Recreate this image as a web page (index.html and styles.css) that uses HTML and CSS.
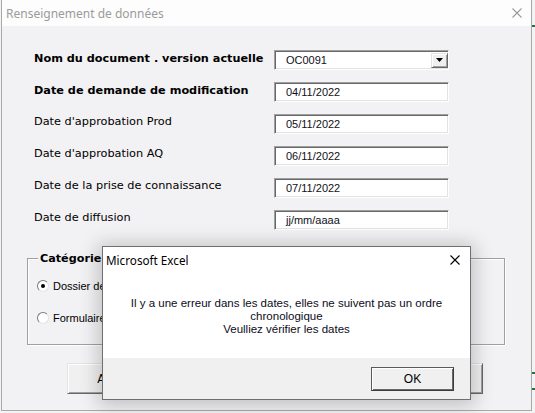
FILE: index.html
```html
<!DOCTYPE html>
<html lang="fr">
<head>
<meta charset="utf-8">
<title>Renseignement de données</title>
<link rel="stylesheet" href="styles.css">
</head>
<body>
<div class="desktop">
  <div class="xl-line xl-a"></div>
  <div class="xl-line xl-b"></div>
  <div class="xl-line xl-c"></div>

  <section class="win">
    <header class="titlebar">
      <span class="win-title">Renseignement de données</span>
      <svg class="x x-dim" width="10" height="10" viewBox="0 0 10 10"><path d="M0.5 0.5L9.5 9.5M9.5 0.5L0.5 9.5"/></svg>
    </header>
    <div class="client">
      <div class="form">
        <span class="lbl strong">Nom du document . version actuelle</span>
        <div class="field combo"><span class="val">OC0091</span><span class="dd"><svg width="7" height="4" viewBox="0 0 7 4"><path d="M0 0H7L3.5 4Z"/></svg></span></div>

        <span class="lbl strong">Date de demande de modification</span>
        <div class="field"><span class="val">04/11/2022</span></div>

        <span class="lbl">Date d'approbation Prod</span>
        <div class="field"><span class="val">05/11/2022</span></div>

        <span class="lbl">Date d'approbation AQ</span>
        <div class="field"><span class="val">06/11/2022</span></div>

        <span class="lbl">Date de la prise de connaissance</span>
        <div class="field"><span class="val">07/11/2022</span></div>

        <span class="lbl">Date de diffusion</span>
        <div class="field"><span class="val">jj/mm/aaaa</span></div>
      </div>

      <div class="frame">
        <span class="legend">Catégorie</span>
        <div class="opt"><span class="radio on"></span>Dossier de conception</div>
        <div class="opt"><span class="radio"></span>Formulaire</div>
      </div>

      <div class="actions">
        <div class="btn">Annuler</div>
        <div class="btn"></div>
      </div>
    </div>
  </section>

  <section class="msg">
    <header class="msg-title">
      <span>Microsoft Excel</span>
      <svg class="x" width="10" height="10" viewBox="0 0 10 10"><path d="M0.5 0.5L9.5 9.5M9.5 0.5L0.5 9.5"/></svg>
    </header>
    <div class="msg-body">
      <p>Il y a une erreur dans les dates, elles ne suivent pas un ordre<br>chronologique<br>Veulliez vérifier les dates</p>
    </div>
    <footer class="msg-foot">
      <div class="btn ok">OK</div>
    </footer>
  </section>
</div>
</body>
</html>
```

FILE: styles.css
```css
* { box-sizing: border-box; }

html, body {
  margin: 0;
  padding: 0;
}

body {
  width: 535px;
  height: 413px;
  overflow: hidden;
  background: #f4f4f4;
  font-family: "DejaVu Sans", sans-serif;
}

.desktop {
  position: relative;
  width: 535px;
  height: 413px;
  background: #f3f3f3;
  overflow: hidden;
}

/* Excel sheet hints behind the dialogs */
.xl-line {
  position: absolute;
  background: #217346;
}
.xl-a { left: 532px; top: 25px; width: 3px; height: 2px; }
.xl-b { left: 532px; top: 372px; width: 3px; height: 2px; }
.xl-c { left: 532px; top: 388px; width: 3px; height: 2px; }

/* Main UserForm window */
.win {
  position: absolute;
  left: 1px;
  top: 0;
  width: 531px;
  height: 411px;
  border: 1px solid #a9a9a9;
  border-top: none;
  display: flex;
  flex-direction: column;
  background: #f2f1f3;
}

.titlebar {
  height: 26px;
  flex: none;
  background: #fcfdfc;
  display: flex;
  align-items: center;
  justify-content: space-between;
  padding: 0 9px 0 4px;
}

.win-title {
  font-family: "Noto Sans", sans-serif;
  font-size: 12px;
  color: #9b9b9b;
}

.x path {
  stroke: #000;
  stroke-width: 1.1;
  fill: none;
}
.x-dim path { stroke: #9a9a9a; }

.client {
  flex: 1;
  padding: 18px 0 0 25px;
}

.form {
  display: grid;
  grid-template-columns: 240px 175px;
  grid-auto-rows: 32px;
  align-items: center;
  padding-left: 7px;
}

.lbl {
  font-size: 11.3px;
  line-height: 14px;
  color: #000;
  margin-bottom: 4px;
  white-space: nowrap;
}
.lbl.strong {
  font-weight: bold;
  font-size: 11.25px;
  margin-bottom: 2px;
}

.field {
  height: 20px;
  background: #fff;
  border: 1px solid;
  border-color: #a0a0a0 #ffffff #ffffff #a0a0a0;
  box-shadow: inset 1px 1px 0 #696969, inset -1px -1px 0 #e3e3e3;
  display: flex;
  align-items: center;
  padding-left: 11px;
  font-family: "Liberation Sans", sans-serif;
  font-size: 11px;
  color: #101020;
}

.combo .val { flex: 1; }

.dd {
  width: 17px;
  height: 15px;
  background: #f0f0f0;
  border: 1px solid;
  border-color: #e3e3e3 #696969 #696969 #e3e3e3;
  box-shadow: inset 1px 1px 0 #ffffff, inset -1px -1px 0 #a0a0a0;
  display: flex;
  align-items: center;
  justify-content: center;
}
.dd path { fill: #000; }

/* Frame */
.frame {
  margin-top: 22px;
  width: 478px;
  height: 87px;
  border: 1px solid #a0a0a0;
  box-shadow: 1px 1px 0 #ffffff, inset 1px 1px 0 #ffffff;
  display: flex;
  flex-direction: column;
  align-items: flex-start;
}

.legend {
  margin: -8px 0 0 10px;
  padding: 0 2px;
  background: #f2f1f3;
  font-weight: bold;
  font-size: 11.2px;
  line-height: 15px;
  color: #000;
}

.opt {
  display: flex;
  align-items: center;
  gap: 4px;
  height: 16px;
  margin: 12px 0 0 9px;
  font-family: "Liberation Sans", sans-serif;
  font-size: 11px;
  color: #000;
  white-space: nowrap;
}
.opt + .opt { margin-top: 16px; }

.radio {
  width: 12px;
  height: 12px;
  border-radius: 50%;
  background: #fff;
  border: 1px solid;
  border-color: #7a7a7a #e3e3e3 #e3e3e3 #7a7a7a;
  display: flex;
  align-items: center;
  justify-content: center;
}
.radio.on::after {
  content: "";
  width: 4px;
  height: 4px;
  border-radius: 50%;
  background: #000;
}

/* Buttons */
.actions {
  margin: 18px 0 0 40px;
  width: 416px;
  display: flex;
  justify-content: space-between;
}

.btn {
  width: 105px;
  height: 31px;
  background: #f0f0f0;
  border: 1px solid;
  border-color: #e3e3e3 #696969 #696969 #e3e3e3;
  box-shadow: inset 1px 1px 0 #ffffff, inset -1px -1px 0 #a0a0a0;
  display: flex;
  align-items: center;
  justify-content: center;
  font-family: "DejaVu Sans", sans-serif;
  font-size: 11.5px;
  color: #000;
}

/* Message box */
.msg {
  position: absolute;
  left: 102px;
  top: 246px;
  width: 369px;
  height: 154px;
  border: 1px solid #6f6f6f;
  background: #fff;
  box-shadow: 0 2px 18px 4px rgba(0, 0, 0, 0.2);
  display: flex;
  flex-direction: column;
}

.msg-title {
  height: 26px;
  flex: none;
  display: flex;
  align-items: center;
  justify-content: space-between;
  padding: 0 10px 0 3px;
  font-family: "Noto Sans", sans-serif;
  font-size: 11.7px;
  color: #000;
}

.msg-body {
  flex: 1;
  padding-top: 24px;
}

.msg-body p {
  margin: 0;
  text-align: center;
  white-space: nowrap;
  font-family: "Liberation Sans", sans-serif;
  font-size: 11.5px;
  line-height: 13px;
  color: #0c0c1a;
}

.msg-foot {
  height: 41px;
  flex: none;
  background: #f0f0f0;
  display: flex;
  justify-content: flex-end;
  padding: 9px 16px 0 0;
}

.btn.ok {
  width: 83px;
  height: 24px;
  border-color: #5a5a5a #3c3c3c #3c3c3c #5a5a5a;
  box-shadow: inset 1px 1px 0 #ffffff, inset -1px -1px 0 #696969;
  font-family: "Liberation Sans", sans-serif;
  font-size: 12px;
}
```
